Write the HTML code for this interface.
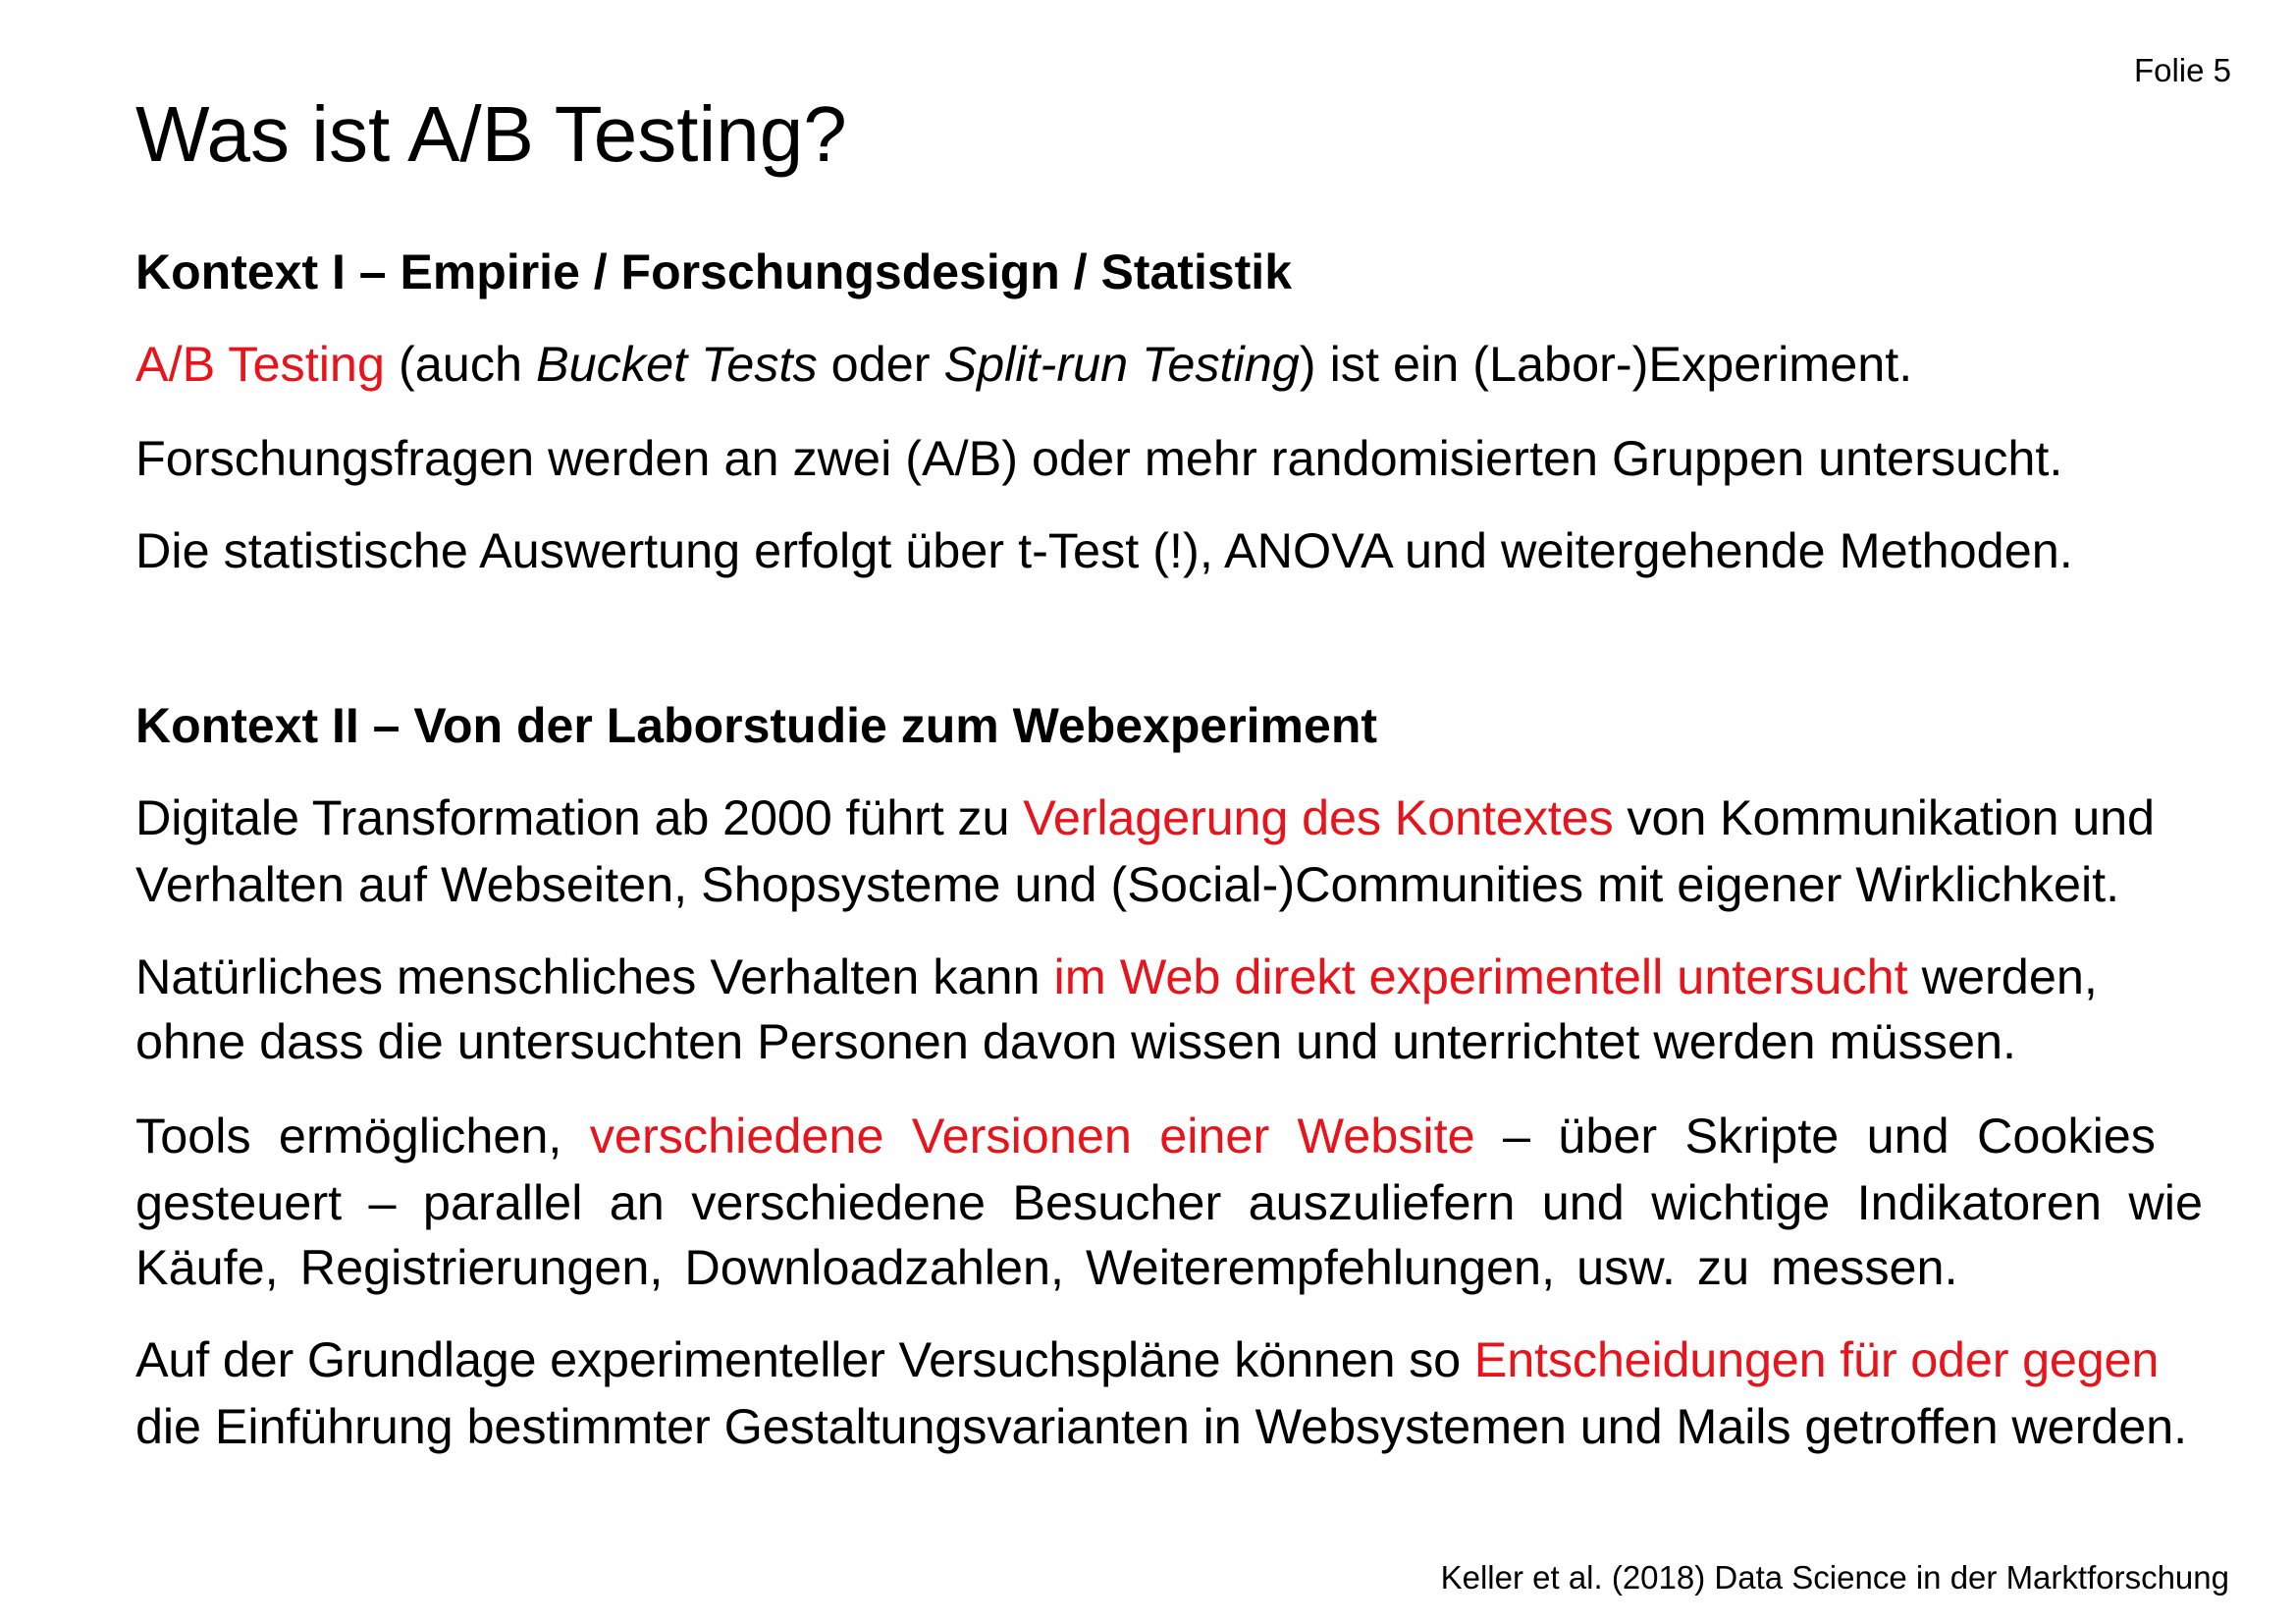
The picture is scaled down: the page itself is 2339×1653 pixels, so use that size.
<!DOCTYPE html>
<html><head><meta charset="utf-8"><style>
html,body{margin:0;padding:0;background:#fff;}
body{width:2339px;height:1653px;position:relative;overflow:hidden;font-family:"Liberation Sans",Arial,sans-serif;color:#000;}
.l{position:absolute;left:138px;font-size:50.4px;line-height:50px;white-space:nowrap;}
.b{font-weight:bold;font-size:50px;}
.r{color:#e8141b;}
.j{width:2106px;text-align:justify;text-align-last:justify;white-space:normal;}
</style></head><body>
<div style="position:absolute;right:66px;top:55px;font-size:33px;line-height:33px;">Folie 5</div>
<div class="l" style="top:97px;font-size:80px;line-height:80px;">Was ist A/B Testing?</div>
<div class="l b" style="top:252px;">Kontext I – Empirie / Forschungsdesign / Statistik</div>
<div class="l" style="top:346px;"><span class="r">A/B Testing</span> (auch <i>Bucket Tests</i> oder <i>Split-run Testing</i>) ist ein (Labor-)Experiment.</div>
<div class="l" style="top:442px;">Forschungsfragen werden an zwei (A/B) oder mehr randomisierten Gruppen untersucht.</div>
<div class="l" style="top:536px;">Die statistische Auswertung erfolgt über t-Test (!), ANOVA und weitergehende Methoden.</div>
<div class="l b" style="top:714px;">Kontext II – Von der Laborstudie zum Webexperiment</div>
<div class="l" style="top:808px;letter-spacing:-0.15px;">Digitale Transformation ab 2000 führt zu <span class="r">Verlagerung des Kontextes</span> von Kommunikation und</div>
<div class="l" style="top:876px;">Verhalten auf Webseiten, Shopsysteme und (Social-)Communities mit eigener Wirklichkeit.</div>
<div class="l" style="top:970px;">Natürliches menschliches Verhalten kann <span class="r">im Web direkt experimentell untersucht</span> werden,</div>
<div class="l" style="top:1036px;">ohne dass die untersuchten Personen davon wissen und unterrichtet werden müssen.</div>
<div class="l j" style="top:1132px;width:2058px;">Tools ermöglichen, <span class="r">verschiedene Versionen einer Website</span> – über Skripte und Cookies</div>
<div class="l j" style="top:1200px;">gesteuert – parallel an verschiedene Besucher auszuliefern und wichtige Indikatoren wie</div>
<div class="l" style="top:1266px;word-spacing:8px;">Käufe, Registrierungen, Downloadzahlen, Weiterempfehlungen, usw. zu messen.</div>
<div class="l" style="top:1360px;letter-spacing:-0.2px;">Auf der Grundlage experimenteller Versuchspläne können so <span class="r">Entscheidungen für oder gegen</span></div>
<div class="l" style="top:1428px;letter-spacing:-0.1px;">die Einführung bestimmter Gestaltungsvarianten in Websystemen und Mails getroffen werden.</div>
<div style="position:absolute;right:68px;top:1590px;font-size:33px;line-height:33px;">Keller et al. (2018) Data Science in der Marktforschung</div>
</body></html>
